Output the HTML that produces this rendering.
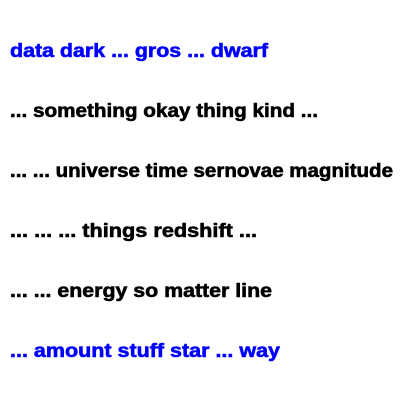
<!DOCTYPE html>
<html><head><style>html,body{margin:0;padding:0;background:#fff;width:400px;height:400px;overflow:hidden}</style></head>
<body>
<svg width="400" height="400" xmlns="http://www.w3.org/2000/svg" style="display:block">
<g font-family="Liberation Sans, sans-serif" font-weight="bold" font-size="19" stroke-width="0.6" stroke-linejoin="round">
<text x="10" y="57" fill="#0000ff" stroke="#0000ff" textLength="258" lengthAdjust="spacingAndGlyphs">data dark ... gros ... dwarf</text>
<text x="10" y="117" fill="#000" stroke="#000" textLength="308" lengthAdjust="spacingAndGlyphs">... something okay thing kind ...</text>
<text x="10" y="177" fill="#000" stroke="#000" textLength="383" lengthAdjust="spacingAndGlyphs">... ... universe time sernovae magnitude</text>
<text x="10" y="237" fill="#000" stroke="#000" textLength="247" lengthAdjust="spacingAndGlyphs">... ... ... things redshift ...</text>
<text x="10" y="297" fill="#000" stroke="#000" textLength="262" lengthAdjust="spacingAndGlyphs">... ... energy so matter line</text>
<text x="10" y="357" fill="#0000ff" stroke="#0000ff" textLength="270" lengthAdjust="spacingAndGlyphs">... amount stuff star ... way</text>
</g>
</svg>
</body></html>
